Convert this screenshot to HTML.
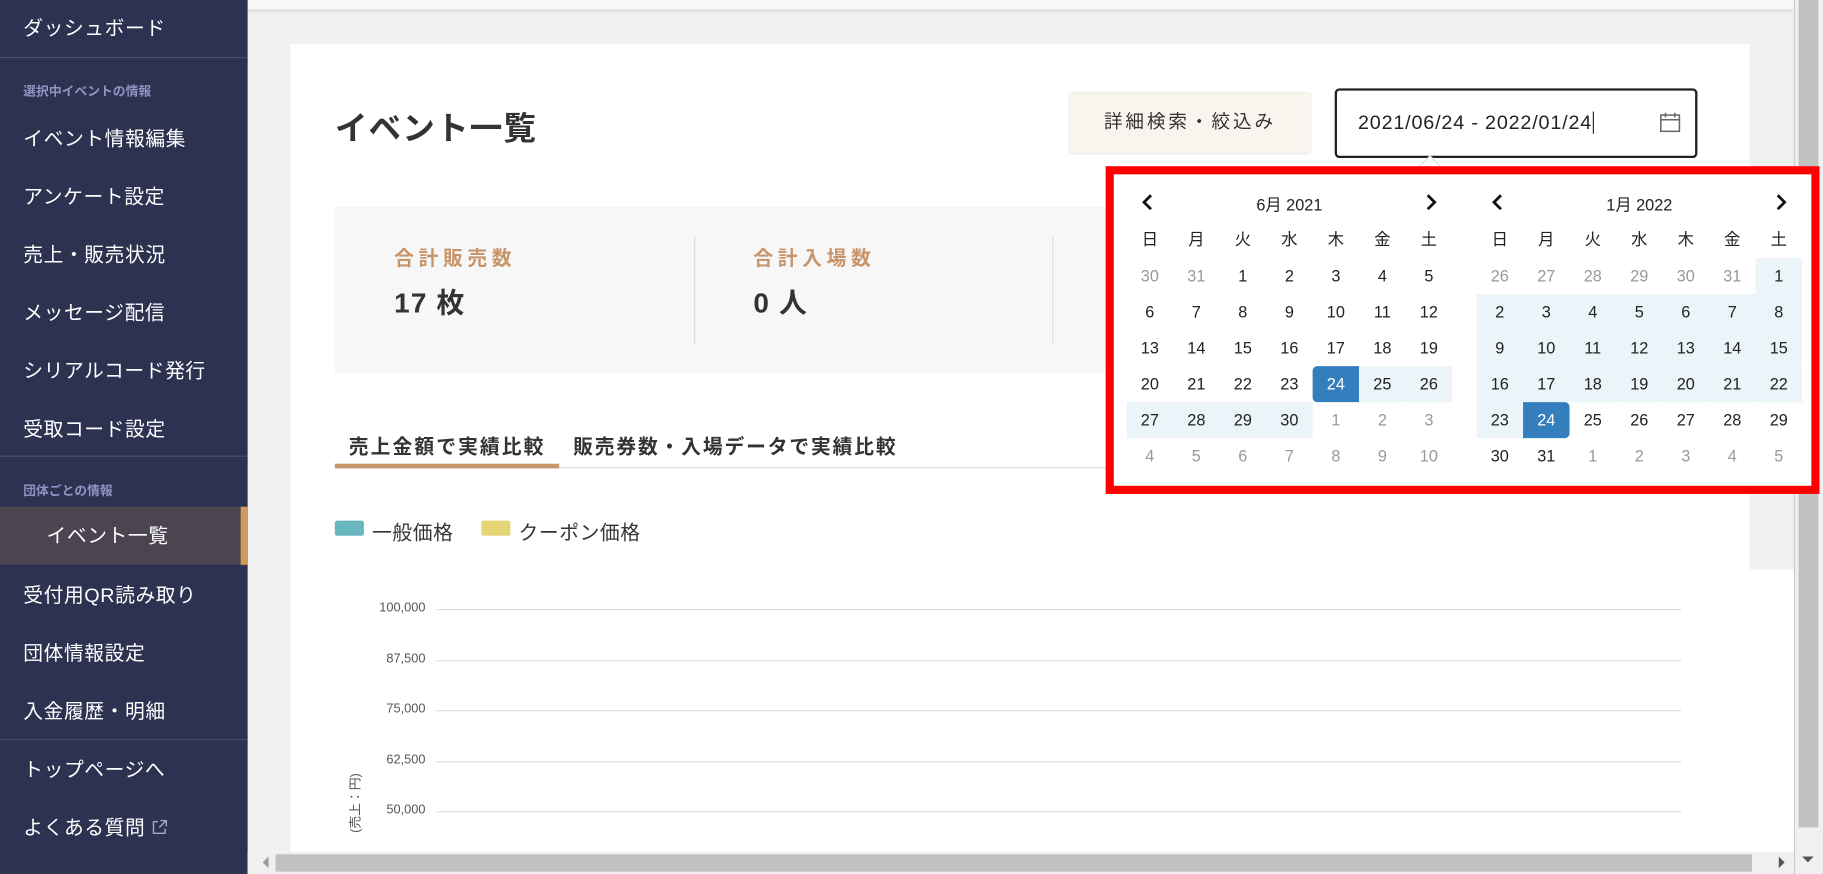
<!DOCTYPE html>
<html><head><meta charset="utf-8">
<style>
*{box-sizing:border-box;margin:0;padding:0}
html,body{width:1823px;height:874px;overflow:hidden;background:#f1f1f1}
body{font-family:"Liberation Sans","Noto Sans CJK JP",sans-serif;color:#333}
#w{position:absolute;left:0;top:0;width:1568px;height:752px;transform:scale(1.16263,1.1622);transform-origin:0 0;background:#f1f1f1}
.a{position:absolute}
#side{left:0;top:0;width:213px;height:752px;background:#2c3250}
.it{position:absolute;left:20px;color:#fff;font-size:17px;letter-spacing:0.5px;line-height:20px;white-space:nowrap;margin-top:3px}
.sec{position:absolute;left:20px;color:#8e95c6;font-size:11px;font-weight:bold}
.hr{position:absolute;left:0;width:213px;height:1px;background:#4a5070}
.cal div{position:absolute;width:40px;height:31px;line-height:31px;text-align:center;font-size:14px;color:#222}
.cal .o{color:#999}
.cal .r{background:#ebf4f9}
.cal .s{background:#357ebd;color:#fff}
.cal .w{color:#222}
.yl{position:absolute;width:60px;text-align:right;font-size:11px;color:#555}
.gl{position:absolute;left:375px;width:1071px;height:1px;background:#ddd}
</style></head><body><div id="w">
<div class="a" style="left:213px;top:0;width:1330px;height:8px;background:#f7f7f7;box-shadow:0 2px 3px #ddd"></div>
<div class="a" style="left:1505px;top:490px;width:38px;height:243px;background:#fff"></div>
<div class="a" style="left:250px;top:38px;width:1255px;height:700px;background:#fff"></div>
<div id="side" class="a">
<div class="it" style="top:12px">ダッシュボード</div>
<div class="hr" style="top:49px"></div>
<div class="sec" style="top:70px">選択中イベントの情報</div>
<div class="it" style="top:107px">イベント情報編集</div>
<div class="it" style="top:157px">アンケート設定</div>
<div class="it" style="top:207px">売上・販売状況</div>
<div class="it" style="top:257px">メッセージ配信</div>
<div class="it" style="top:307px">シリアルコード発行</div>
<div class="it" style="top:357px">受取コード設定</div>
<div class="hr" style="top:392px"></div>
<div class="sec" style="top:414px">団体ごとの情報</div>
<div class="a" style="left:0;top:436px;width:213px;height:50px;background:#4a4550"></div>
<div class="a" style="left:207px;top:436px;width:6px;height:50px;background:#d09a5c"></div>
<div class="it" style="top:449px;left:40px">イベント一覧</div>
<div class="it" style="top:500px">受付用QR読み取り</div>
<div class="it" style="top:550px">団体情報設定</div>
<div class="it" style="top:600px">入金履歴・明細</div>
<div class="hr" style="top:636px"></div>
<div class="it" style="top:650px">トップページへ</div>
<div class="it" style="top:700px">よくある質問 <svg width="14" height="14" viewBox="0 0 14 14" style="vertical-align:-1px"><path d="M6 2H2v10h10V8M8 1h5v5M13 1L7 7" fill="none" stroke="#aab" stroke-width="1.2"/></svg></div>
</div>
<div class="a" style="left:288px;top:89px;font-size:28px;letter-spacing:1px;font-weight:bold;color:#333">イベント一覧</div>
<div class="a" style="left:919px;top:79px;width:209px;height:54px;background:#f9f4ee;border:1px solid #eee;border-radius:3px;text-align:center;line-height:52px;font-size:16px;letter-spacing:2.5px">詳細検索・絞込み</div>
<div class="a" style="left:1148px;top:76px;width:312px;height:60px;border:2px solid #222;border-radius:4px;background:#fff"></div>
<div class="a" style="left:1168px;top:96px;font-size:17px;letter-spacing:0.7px;color:#222">2021/06/24 - 2022/01/24<span style="border-left:1px solid #222;margin-left:1px"></span></div>
<svg class="a" style="left:1427px;top:96px" width="19" height="19" viewBox="0 0 19 19"><rect x="1.5" y="3" width="16" height="14" fill="none" stroke="#666" stroke-width="1.3"/><path d="M1.5 7h16M5.5 1v4M13.5 1v4" stroke="#666" stroke-width="1.3"/></svg>
<div class="a" style="left:288px;top:178px;width:1192px;height:143px;background:#f7f7f7"></div>
<div class="a" style="left:597px;top:203px;width:1px;height:93px;background:#ddd"></div>
<div class="a" style="left:905px;top:203px;width:1px;height:93px;background:#ddd"></div>
<div class="a" style="left:339px;top:208px;font-size:17px;letter-spacing:4px;color:#c8956a;font-weight:bold">合計販売数</div>
<div class="a" style="left:339px;top:241px;font-size:24px;letter-spacing:1px;font-weight:bold;color:#333">17 枚</div>
<div class="a" style="left:648px;top:208px;font-size:17px;letter-spacing:4px;color:#c8956a;font-weight:bold">合計入場数</div>
<div class="a" style="left:648px;top:241px;font-size:24px;letter-spacing:1px;font-weight:bold;color:#333">0 人</div>
<div class="a" style="left:288px;top:402px;width:1192px;height:1px;background:#ddd"></div>
<div class="a" style="left:288px;top:399px;width:193px;height:4px;background:#c8956a"></div>
<div class="a" style="left:300px;top:370px;font-size:17px;letter-spacing:1.8px;font-weight:bold;color:#333">売上金額で実績比較</div>
<div class="a" style="left:493px;top:370px;font-size:17px;letter-spacing:1.6px;font-weight:bold;color:#333">販売券数・入場データで実績比較</div>
<div class="a" style="left:288px;top:448px;width:25px;height:13px;background:#68b7bf;border-radius:2px"></div>
<div class="a" style="left:320px;top:444px;font-size:17px;letter-spacing:0.5px">一般価格</div>
<div class="a" style="left:414px;top:448px;width:25px;height:13px;background:#e6d574;border-radius:2px"></div>
<div class="a" style="left:446px;top:444px;font-size:17px;letter-spacing:0.5px">クーポン価格</div>
<div class="yl" style="left:306px;top:517px">100,000</div><div class="gl" style="top:524px"></div>
<div class="yl" style="left:306px;top:561px">87,500</div><div class="gl" style="top:568px"></div>
<div class="yl" style="left:306px;top:604px">75,000</div><div class="gl" style="top:611px"></div>
<div class="yl" style="left:306px;top:648px">62,500</div><div class="gl" style="top:655px"></div>
<div class="yl" style="left:306px;top:691px">50,000</div><div class="gl" style="top:698px"></div>
<div class="a" style="left:275px;top:683px;width:60px;transform:rotate(-90deg);font-size:11px;color:#555;text-align:center">(売上：円)</div>
<div class="a" style="left:1543px;top:0;width:25px;height:752px;background:#f0f0f0;border-left:1px solid #ccc"></div>
<div class="a" style="left:1547px;top:0;width:17px;height:712px;background:#c1c1c1"></div>
<div class="a" style="left:1550px;top:737px;width:0;height:0;border:5px solid transparent;border-top-color:#555"></div>
<div class="a" style="left:213px;top:733px;width:1330px;height:19px;background:#f0f0f0"></div>
<div class="a" style="left:237px;top:735px;width:1270px;height:15px;background:#c1c1c1"></div>
<div class="a" style="left:221px;top:737px;width:0;height:0;border:5px solid transparent;border-right-color:#999"></div>
<div class="a" style="left:1530px;top:737px;width:0;height:0;border:5px solid transparent;border-left-color:#555"></div>
<div class="a" style="left:1224px;top:136px;width:12px;height:12px;background:#fff;border-left:1px solid #ddd;border-top:1px solid #ddd;transform:rotate(45deg)"></div>
<div class="a" style="left:951px;top:143px;width:614px;height:282px;background:#fff;border:7px solid #f00"></div>
<div class="cal" id="cal"></div>
<svg class="a" style="left:982px;top:167px" width="10" height="14"><path d="M8 1L2 7l6 6" fill="none" stroke="#111" stroke-width="2.4"/></svg>
<svg class="a" style="left:1226px;top:167px" width="10" height="14"><path d="M2 1l6 6-6 6" fill="none" stroke="#111" stroke-width="2.4"/></svg>
<svg class="a" style="left:1283px;top:167px" width="10" height="14"><path d="M8 1L2 7l6 6" fill="none" stroke="#111" stroke-width="2.4"/></svg>
<svg class="a" style="left:1527px;top:167px" width="10" height="14"><path d="M2 1l6 6-6 6" fill="none" stroke="#111" stroke-width="2.4"/></svg>
<div class="a" style="left:1009px;top:166px;width:200px;text-align:center;font-size:14px;color:#222">6月 2021</div>
<div class="a" style="left:1310px;top:166px;width:200px;text-align:center;font-size:14px;color:#222">1月 2022</div>
<script>
var wd=["日","月","火","水","木","金","土"];
var L=[["30o","31o","1","2","3","4","5"],["6","7","8","9","10","11","12"],["13","14","15","16","17","18","19"],["20","21","22","23","24s","25r","26r"],["27r","28r","29r","30r","1o","2o","3o"],["4o","5o","6o","7o","8o","9o","10o"]];
var R=[["26o","27o","28o","29o","30o","31o","1r"],["2r","3r","4r","5r","6r","7r","8r"],["9r","10r","11r","12r","13r","14r","15r"],["16r","17r","18r","19r","20r","21r","22r"],["23r","24s","25","26","27","28","29"],["30","31","1o","2o","3o","4o","5o"]];
var h="";
function m(x0,g,sl){for(var c=0;c<7;c++)h+='<div class="w" style="left:'+(x0+c*40)+'px;top:191px">'+wd[c]+'</div>';
for(var r=0;r<6;r++)for(var c=0;c<7;c++){var v=g[r][c],cl="",t=v.replace(/[osr]$/,"");var f=v.slice(-1);if(f=="o")cl="o";if(f=="r")cl="r";var st="";if(f=="s"){cl="s";st=sl?"border-radius:4px 0 0 4px;":"border-radius:0 4px 4px 0;";}
h+='<div class="'+cl+'" style="'+st+'left:'+(x0+c*40)+'px;top:'+(222+r*31)+'px">'+t+'</div>';}}
m(969,L,1);m(1270,R,0);
document.getElementById("cal").innerHTML=h;
</script>
</div></body></html>
